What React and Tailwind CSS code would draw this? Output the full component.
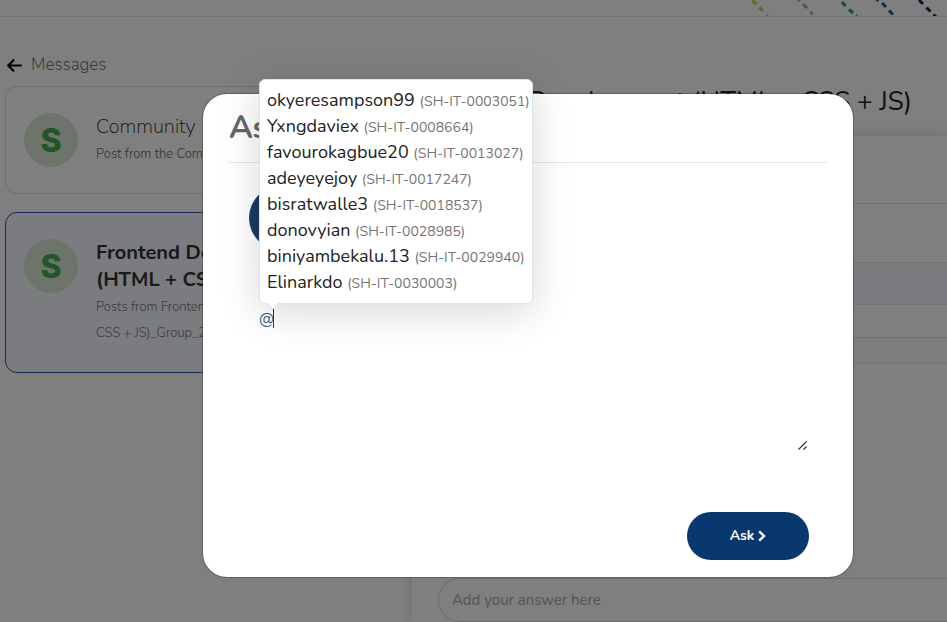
import { FaArrowLeft } from "react-icons/fa6";

const people = [
  { name: "okyeresampson99", id: "SH-IT-0003051" },
  { name: "Yxngdaviex", id: "SH-IT-0008664" },
  { name: "favourokagbue20", id: "SH-IT-0013027" },
  { name: "adeyeyejoy", id: "SH-IT-0017247" },
  { name: "bisratwalle3", id: "SH-IT-0018537" },
  { name: "donovyian", id: "SH-IT-0028985" },
  { name: "biniyambekalu.13", id: "SH-IT-0029940" },
  { name: "Elinarkdo", id: "SH-IT-0030003" },
];

function Avatar() {
  return (
    <div className="flex size-[54px] shrink-0 items-center justify-center rounded-full bg-[#dbebd5] pt-[2px] font-['Inter',sans-serif] text-[32px] leading-none font-extrabold text-[#42ac4c]">
      S
    </div>
  );
}

function Header() {
  return (
    <header className="flex h-[17px] justify-end border-b border-[#e6e6e6]">
      <svg width="207" height="16" viewBox="0 0 207 16" fill="none" strokeWidth="3" aria-hidden="true">
        <path d="M12.500 0.500L16 4M19.500 7.500L23 11M26.500 15L28 16" stroke="#c4d13c" />
        <path d="M58 -1L60 1M63 4L67 8M70.500 12L72.500 14" stroke="#7fb878" />
        <path d="M102 2L105.500 6M109 9.500L113 13M116 15.500L117 16" stroke="#3c9a3e" />
        <path d="M136.500 -1L138.500 1M142 3L146 7M149 10.500L153 14.500" stroke="#0f62a8" />
        <path d="M179 0L183 4M186.500 7.500L190.500 11.500M193.500 14.500L196 17" stroke="#0a2d63" />
      </svg>
    </header>
  );
}

function Sidebar() {
  return (
    <aside className="w-[386px] shrink-0 pt-[34px]">
      <a href="#messages" className="flex h-7 items-center gap-2 pl-px text-[17px] font-light text-[#777]">
        <FaArrowLeft className="size-[17px] text-black" aria-hidden="true" />
        Messages
      </a>
      <div className="mt-[7px] flex flex-col gap-[18px]">
        <a href="#community" className="flex gap-[18px] rounded-xl border border-[#dedede] px-[18px] py-[26px]">
          <Avatar />
          <div>
            <h2 className="text-xl leading-[27px] font-extralight text-[#222]">Community</h2>
            <p className="mt-px text-[13px] leading-[26px] font-light whitespace-nowrap text-[#666]">
              Post from the Community
            </p>
          </div>
        </a>
        <a
          href="#frontend"
          className="flex gap-[18px] rounded-xl border border-[#2a56a8] bg-[#f5f8ff] px-[18px] py-[26px]"
        >
          <Avatar />
          <div>
            <h2 className="text-xl leading-[27px] font-bold text-[#333]">
              Frontend Development
              <br />
              (HTML + CSS + JS)
            </h2>
            <p className="mt-px text-[13px] leading-[26px] font-light whitespace-nowrap text-[#777]">
              Posts from Frontend Development (HTML +
              <br />
              CSS + JS)_Group_2
            </p>
          </div>
        </a>
      </div>
    </aside>
  );
}

function Feed() {
  return (
    <main className="flex min-w-0 flex-1 flex-col pt-[67px]">
      <h1 className="pr-[35px] text-right text-[26px] leading-9 whitespace-nowrap text-[#222]">
        Frontend Development (HTML + CSS + JS)
      </h1>
      <section className="mt-4 flex-1 shadow-[0_0_14px_rgba(0,0,0,0.15)]">
        <div className="h-[68px] border-b border-[#e6e6e6]" />
        <div className="h-[59px] border-b border-[#e6e6e6]" />
        <div className="h-[42px] border-b border-[#e6e6e6] bg-[#f5f9ff]" />
        <div className="h-[33px] border-b border-[#e6e6e6]" />
        <div className="h-[26px] border-b border-[#e6e6e6] bg-[#fafafa]" />
        <div className="mt-[214px] pl-[26px]">
          <input
            aria-label="Your answer"
            placeholder="Add your answer here"
            className="h-11 w-full rounded-l-full border border-r-0 border-[#dcdcdc] px-[13px] text-[15px] text-[#333] outline-none placeholder:text-[#a8a8a8]"
          />
        </div>
      </section>
    </main>
  );
}

function MentionMenu() {
  return (
    <div className="absolute bottom-full left-[10px] w-[274px] rounded-md border border-[#e2e2e6] bg-white px-[7px] pt-[7px] pb-2 shadow-[0_8px_40px_rgba(0,0,0,0.16)]">
      <ul>
        {people.map((p) => (
          <li key={p.id} className="h-[26px] text-lg leading-[26px] whitespace-nowrap text-[#222]">
            {p.name} <span className="text-sm text-[#757575]">({p.id})</span>
          </li>
        ))}
      </ul>
      <svg className="absolute top-full left-[6px]" width="14" height="7" viewBox="0 0 14 7" aria-hidden="true">
        <path d="M0 -1L7 6L14 -1" fill="#fff" stroke="#e2e2e6" />
      </svg>
    </div>
  );
}

function AskDialog() {
  return (
    <div className="absolute inset-0 bg-black/50 pt-[94px] pr-[94px] pl-[203px]">
      <div
        role="dialog"
        aria-labelledby="ask-title"
        className="rounded-[24px] bg-white px-[26px] pt-3 pb-[17px] shadow-[0_0_1px_1px_rgba(0,0,0,0.25)]"
      >
        <h2 id="ask-title" className="border-b border-[#e6e6e6] pb-3 text-[32px] leading-[44px] font-bold text-[#666]">
          Ask
        </h2>
        <div className="px-5 pt-[23px]">
          <div className="size-16 rounded-full bg-[#1a3a68]" />
          <div className="relative mt-[54px]">
            <textarea
              aria-label="Your question"
              defaultValue="@"
              className="block h-[147px] w-full resize-none px-[10px] pt-[3px] text-base leading-6 text-[#2f5488] outline-none"
            />
            <span className="absolute top-[3px] left-6 h-[21px] w-px bg-[#1a3a68]" />
            <svg
              className="absolute right-0 bottom-px"
              width="9"
              height="9"
              viewBox="0 0 9 9"
              fill="none"
              stroke="#333"
              strokeWidth="1.200"
              aria-hidden="true"
            >
              <path d="M0.500 8.500L8.500 0.500M5.500 8.500L8.500 5.500" />
            </svg>
            <MentionMenu />
          </div>
        </div>
        <div className="mt-[61px] flex justify-end pr-[18px]">
          <button
            type="button"
            className="flex h-12 w-[122px] items-center justify-center gap-1 rounded-full bg-[#08386e] text-sm font-bold text-white"
          >
            Ask
            <svg className="h-3 w-2" viewBox="0 0 8 12" fill="none" stroke="currentColor" strokeWidth="2.400" aria-hidden="true">
              <path d="M1.200 1.300L6 6L1.200 10.700" />
            </svg>
          </button>
        </div>
      </div>
    </div>
  );
}

export default function App() {
  return (
    <div className="relative flex h-screen flex-col overflow-hidden bg-white font-['Nunito','Lato',sans-serif]">
      <Header />
      <div className="flex flex-1 gap-[21px] pl-[5px]">
        <Sidebar />
        <Feed />
      </div>
      <AskDialog />
    </div>
  );
}
